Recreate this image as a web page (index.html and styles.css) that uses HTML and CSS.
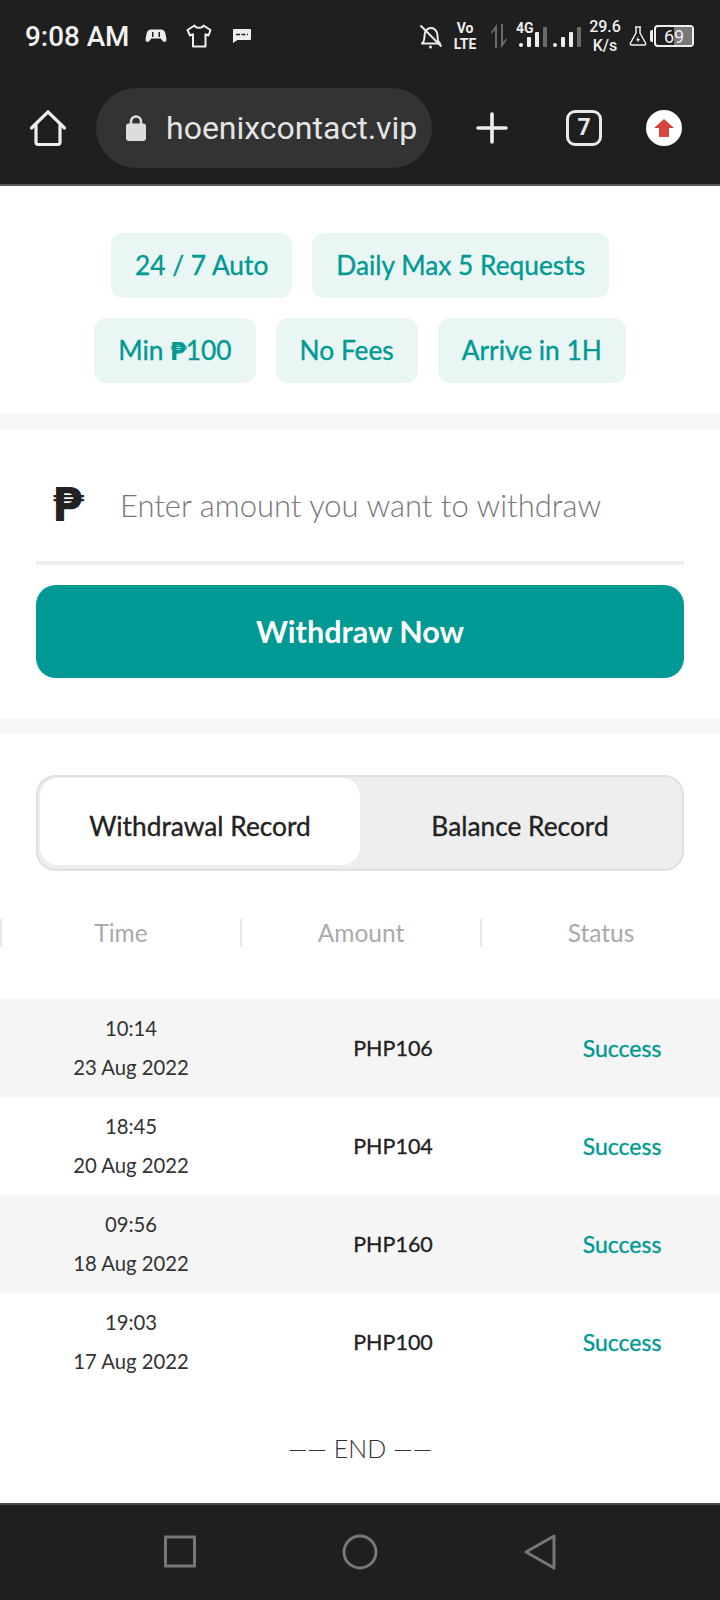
FILE: index.html
```html
<!DOCTYPE html>
<html lang="en">
<head>
<meta charset="utf-8">
<title>Withdraw</title>
<link rel="stylesheet" href="styles.css">
</head>
<body>
<div class="phone">
  <header class="chrome">
    <div class="status">
      <div class="status-left">
        <span class="clock">9:08 AM</span>
        <svg class="ic-game" viewBox="0 0 22 14"><path fill="#eee" d="M6 0.500h10c2.500 0 4 1.500 4.500 4.500l1 5.500c.2 2-2 3.200-3.500 1.800L15.500 9.500h-9L4 12.300C2.500 13.700.3 12.500.5 10.500L1.500 5C2 2 3.500.5 6 .5z"/><path fill="#1f1f1f" d="M7 3h1.500v5H7zM13.500 3H15v5h-1.500z"/></svg>
        <svg class="ic-shirt" viewBox="0 0 26 24"><path fill="none" stroke="#eee" stroke-width="2" stroke-linejoin="round" d="M8.500 1.500 1.500 6l2.500 5.500 3-1.200V22.500h12.500V10.300l3 1.200L24.500 6l-7-4.500c-.8 3-8.200 3-9 0z"/></svg>
        <svg class="ic-msg" viewBox="0 0 18 14"><path fill="#eee" d="M1 0h16a1 1 0 0 1 1 1v9a1 1 0 0 1-1 1H4.500L0 14V1a1 1 0 0 1 1-1z"/><path stroke="#1f1f1f" stroke-width="1.600" stroke-dasharray="4 1.500" d="M3 5.500h12"/></svg>
      </div>
      <div class="status-right">
        <svg class="ic-bell" viewBox="0 0 24 25"><path fill="none" stroke="#eee" stroke-width="2" stroke-linejoin="round" d="M3 19.500c2-2 2.500-3 2.500-8 0-4.500 3-7.500 6.500-7.500s6.500 3 6.500 7.500c0 5 .5 6 2.500 8z"/><path stroke="#eee" stroke-width="2" d="M1.500 1.500l21 21"/><circle cx="11.500" cy="23" r="1.500" fill="#eee"/></svg>
        <div class="volte"><span>Vo</span><span>LTE</span></div>
        <svg class="ic-arrows" viewBox="0 0 18 24"><path fill="#6a6a6a" d="M7 0v24H5V6L1 10V8zM11 24V0h2v18l4-4v2z"/></svg>
        <div class="signal">
          <span class="net">4G</span>
          <svg class="ic-bars" viewBox="0 0 28 20"><g fill="#eee"><rect y="16" width="4" height="4" rx="2"/><rect x="8" y="10" width="4" height="10" rx="1"/><rect x="16" y="5" width="4" height="15" rx="1"/></g><rect x="24" width="4" height="20" rx="1" fill="#6a6a6a"/></svg>
        </div>
        <svg class="ic-bars solo" viewBox="0 0 28 20"><g fill="#eee"><rect y="16" width="4" height="4" rx="2"/><rect x="8" y="10" width="4" height="10" rx="1"/><rect x="16" y="5" width="4" height="15" rx="1"/></g><rect x="24" width="4" height="20" rx="1" fill="#6a6a6a"/></svg>
        <div class="speed"><span>29.6</span><span>K/s</span></div>
        <svg class="ic-flask" viewBox="0 0 18 20"><path fill="none" stroke="#eee" stroke-width="1.500" stroke-linejoin="round" d="M6 1h6M7 1v6L1.500 17c-.5 1 0 2 1 2h13c1 0 1.500-1 1-2L11 7V1"/><path fill="#eee" d="M9.500 10 7 14.500h2L8.500 17l2.500-4H9z"/></svg>
        <div class="battery"><i class="batt-cap"></i><div class="batt-body"><span class="batt-fill"></span><span class="batt-num">69</span></div></div>
      </div>
    </div>
    <div class="toolbar">
      <svg class="ic-home" viewBox="0 0 36 36"><path fill="none" stroke="#eee" stroke-width="3.200" stroke-linejoin="round" stroke-linecap="round" d="M1.500 18 18 1.800 34.500 18M6 14.500V32a2.500 2.500 0 0 0 2.500 2.500h19A2.500 2.500 0 0 0 30 32V14.500"/></svg>
      <div class="url">
        <svg class="ic-lock" viewBox="0 0 20 26"><path fill="none" stroke="#ddd" stroke-width="2.500" d="M5 10V6.500a5 5 0 0 1 10 0V10"/><rect y="8.500" width="20" height="17.500" rx="3" fill="#ddd"/></svg>
        <span class="url-text">hoenixcontact.vip</span>
      </div>
      <svg class="ic-plus" viewBox="0 0 32 32"><path stroke="#eee" stroke-width="3.600" stroke-linecap="round" d="M16 2v28M2 16h28"/></svg>
      <div class="tabs-count">7</div>
      <div class="update"><svg viewBox="0 0 20 18"><path fill="#d8453a" d="M10 0 20 9h-5v9H5V9H0z"/></svg></div>
    </div>
  </header>

  <main class="content">
    <section class="chips">
      <div class="chip-row"><span class="chip">24 / 7 Auto</span><span class="chip">Daily Max 5 Requests</span></div>
      <div class="chip-row"><span class="chip">Min <span class="chip-peso">₱</span>100</span><span class="chip">No Fees</span><span class="chip">Arrive in 1H</span></div>
    </section>

    <section class="form">
      <div class="field">
        <span class="peso">₱</span>
        <span class="placeholder">Enter amount you want to withdraw</span>
      </div>
      <div class="submit">Withdraw Now</div>
    </section>

    <section class="records">
      <div class="switch">
        <div class="switch-item active">Withdrawal Record</div>
        <div class="switch-item">Balance Record</div>
      </div>
      <div class="thead">
        <div class="th">Time</div>
        <div class="th">Amount</div>
        <div class="th">Status</div>
      </div>
      <div class="row shade">
        <div class="when"><span>10:14</span><span>23 Aug 2022</span></div>
        <div class="amount">PHP106</div>
        <div class="state">Success</div>
      </div>
      <div class="row">
        <div class="when"><span>18:45</span><span>20 Aug 2022</span></div>
        <div class="amount">PHP104</div>
        <div class="state">Success</div>
      </div>
      <div class="row shade">
        <div class="when"><span>09:56</span><span>18 Aug 2022</span></div>
        <div class="amount">PHP160</div>
        <div class="state">Success</div>
      </div>
      <div class="row">
        <div class="when"><span>19:03</span><span>17 Aug 2022</span></div>
        <div class="amount">PHP100</div>
        <div class="state">Success</div>
      </div>
      <div class="end">—— END ——</div>
    </section>
  </main>

  <nav class="navbar">
    <svg class="nav-ic" viewBox="0 0 36 36"><rect x="1.500" y="3" width="29" height="29" fill="none" stroke="#777" stroke-width="3"/></svg>
    <svg class="nav-ic" viewBox="0 0 36 36"><circle cx="18" cy="18" r="16" fill="none" stroke="#777" stroke-width="3"/></svg>
    <svg class="nav-ic" viewBox="0 0 36 36"><path fill="none" stroke="#777" stroke-width="3" stroke-linejoin="round" d="M34 2v32L6 18z"/></svg>
  </nav>
</div>
</body>
</html>
```
FILE: styles.css
```css
* { box-sizing: border-box; }
html, body { margin: 0; padding: 0; background: #fff; }
.phone {
  width: 720px; height: 1600px; display: flex; flex-direction: column;
  font-family: "Lato", "Liberation Sans", sans-serif; overflow: hidden;
}
.chrome { height: 186px; background: #1f1f1f; border-bottom: 2px solid #5a5a5a; flex: none; }
.status { height: 72px; display: flex; justify-content: space-between; align-items: center; padding: 0 26px 0 25px; }
.status-left { display: flex; align-items: center; }
.clock { font: 500 27.800px "Roboto", sans-serif; color: #f2f2f2; margin-right: 16px; }
.ic-game { width: 22px; height: 14px; margin-right: 19px; }
.ic-shirt { width: 26px; height: 24px; margin-right: 21px; }
.ic-msg { width: 18px; height: 14px; }
.status-right { display: flex; align-items: center; }
.ic-bell { width: 24px; height: 25px; margin-right: 9px; }
.volte { display: flex; flex-direction: column; align-items: center; font: 700 14px/16.500px "Roboto", sans-serif; color: #eee; width: 26px; margin-right: 12px; }
.ic-arrows { width: 18px; height: 24px; margin-right: 11px; }
.signal { position: relative; width: 28px; height: 20px; margin: 2px 6px 0 0; }
.net { position: absolute; left: -3px; top: -6px; font: 700 14px/14px "Roboto", sans-serif; color: #eee; }
.ic-bars { display: block; width: 28px; height: 20px; }
.ic-bars.solo { margin: 2px 9px 0 0; }
.speed { display: flex; flex-direction: column; align-items: center; font: 500 16px/19px "Roboto", sans-serif; color: #eee; width: 30px; margin-right: 9px; }
.ic-flask { width: 18px; height: 20px; margin-right: 3px; }
.battery { display: flex; align-items: center; }
.batt-cap { width: 3px; height: 12px; background: #eee; border-radius: 2px 0 0 2px; margin-right: 1px; }
.batt-body { position: relative; width: 40px; height: 22px; border: 2px solid #eee; border-radius: 4px; overflow: hidden; display: flex; align-items: center; justify-content: center; }
.batt-fill { position: absolute; top: 0; bottom: 0; right: 0; width: 18px; background: #777; }
.batt-num { position: relative; font: 400 18px "Roboto", sans-serif; color: #eee; }
.toolbar { height: 112px; display: flex; align-items: center; padding: 0 0 0 30px; }
.ic-home { width: 36px; height: 36px; margin-right: 30px; flex: none; }
.url { width: 336px; height: 80px; border-radius: 40px; background: #333; display: flex; align-items: center; padding-left: 30px; flex: none; }
.ic-lock { width: 20px; height: 26px; margin-right: 20px; flex: none; }
.url-text { font: 400 32px "Roboto", sans-serif; color: #e4e4e4; white-space: nowrap; }
.ic-plus { width: 32px; height: 32px; margin: 0 58px 0 44px; flex: none; }
.tabs-count { width: 36px; height: 36px; border: 3.500px solid #e8e8e8; border-radius: 9px; color: #e8e8e8; font: 700 23px/29px "Roboto", sans-serif; text-align: center; margin-right: 44px; flex: none; }
.update { width: 36px; height: 36px; border-radius: 50%; background: #fff; display: flex; align-items: center; justify-content: center; flex: none; }
.update svg { width: 20px; height: 18px; }

.content { flex: 1; min-height: 0; display: flex; flex-direction: column; }
.chips { padding: 47px 0 30px; display: flex; flex-direction: column; gap: 20px; border-bottom: 16px solid #f7f7f7; }
.chip-row { display: flex; justify-content: center; gap: 20px; }
.chip { height: 65px; line-height: 65px; padding: 0 24px; border-radius: 12px; background: #eaf6f3; color: #009994; font-size: 26.300px; -webkit-text-stroke: .35px currentColor; }
.chip-peso { font-family: "DejaVu Sans", sans-serif; font-weight: 700; font-size: 24px; letter-spacing: -1px; -webkit-text-stroke: 0; }
.form { padding: 0 36px 41px; border-bottom: 15px solid #f7f7f7; }
.field { height: 136px; padding: 20px 0 0 16px; display: flex; align-items: center; border-bottom: 4px solid #eeeeee; margin-bottom: 20px; }
.peso { font-family: "DejaVu Sans", sans-serif; font-size: 46px; font-weight: 700; color: #222; width: 68px; line-height: 1; }
.placeholder { font-size: 31px; font-weight: 300; color: #777; white-space: nowrap; }
.submit { height: 93px; line-height: 93px; border-radius: 20px; background: #009994; color: #fff; font-size: 30.500px; font-weight: 700; text-align: center; }
.records { flex: 1; padding-top: 41px; }
.switch { margin: 0 36px; height: 96px; padding: 1px 2px 4px; background: #eeeeee; border: 2px solid #e0e0e0; border-radius: 20px; display: flex; }
.switch-item { flex: 1; display: flex; align-items: center; justify-content: center; padding-top: 8px; color: #222; font-size: 26.300px; -webkit-text-stroke: .35px currentColor; border-radius: 18px; }
.switch-item.active { background: #fff; }
.thead { display: flex; margin-top: 48px; margin-bottom: 52px; height: 28px; }
.th { width: 240px; border-left: 2px solid #e8e8e8; color: #aaa; font-size: 24.500px; line-height: 28px; text-align: center; }
.row { height: 98px; display: flex; align-items: center; }
.row.shade { background: #f5f5f5; }
.when { width: 262px; display: flex; flex-direction: column; align-items: center; font-size: 20.300px; line-height: 39px; color: #333; }
.amount { width: 262px; text-align: center; font-size: 21.500px; -webkit-text-stroke: .3px currentColor; color: #222; }
.state { width: 196px; text-align: center; font-size: 23px; -webkit-text-stroke: .35px currentColor; color: #009994; }
.end { margin-top: 42px; text-align: center; font-size: 25px; font-weight: 300; color: #333; }
.navbar { height: 97px; flex: none; background: #1f1f1f; border-top: 2px solid #4a4a4a; display: flex; align-items: center; justify-content: center; gap: 142px; padding-bottom: 2px; }
.nav-ic { width: 36px; height: 36px; }
```
